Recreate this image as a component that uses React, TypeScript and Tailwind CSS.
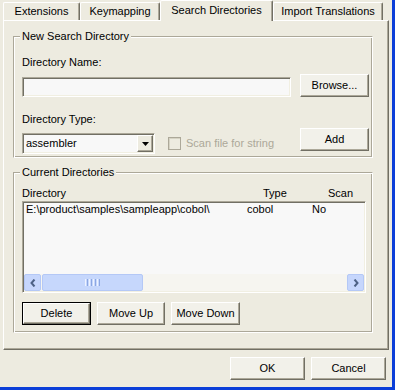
import React from "react";

const raised =
  "border border-t-white border-l-white border-r-[#716f64] border-b-[#716f64] shadow-[inset_-1px_-1px_0_#aca899]";
const sunken =
  "border border-t-[#aca899] border-l-[#aca899] border-r-white border-b-white shadow-[inset_1px_1px_0_#716f64,inset_-1px_-1px_0_#f1efe2]";
const etched =
  "border border-t-[#aca899] border-l-[#aca899] border-r-white border-b-white shadow-[inset_1px_1px_0_white,inset_-1px_-1px_0_#aca899]";

function Btn({ label, className, def }: { label: string; className: string; def?: boolean }) {
  if (def) {
    return (
      <div className={`h-[23px] border border-black ${className}`}>
        <div className={`h-full ${raised} bg-[#f2f1ea] flex items-center justify-center`}>{label}</div>
      </div>
    );
  }
  return (
    <div className={`h-[23px] ${raised} bg-[#f2f1ea] flex items-center justify-center ${className}`}>
      {label}
    </div>
  );
}

function Tab({ label, className, active }: { label: string; className: string; active?: boolean }) {
  return (
    <div
      className={`${
        active ? "h-[21px] -mb-px pb-[2px] bg-[#edebe0]" : "h-[18px]"
      } border-t border-l border-r border-t-white border-l-white border-r-[#716f64] shadow-[inset_-1px_0_0_#aca899] rounded-t-[2px] flex items-center justify-center ${className}`}
    >
      {label}
    </div>
  );
}

function Arrow({ dir }: { dir: "left" | "right" }) {
  return (
    <div className="w-[17px] h-full rounded-[2px] bg-[#c6d6fc] border border-[#b4c8f6] flex items-center justify-center">
      <svg width="6" height="8" viewBox="0 0 6 8">
        <path
          d={dir === "left" ? "M4.5 0.5 L1.5 4 L4.5 7.5" : "M1.5 0.5 L4.5 4 L1.5 7.5"}
          fill="none"
          stroke="#4d6185"
          strokeWidth="2"
        />
      </svg>
    </div>
  );
}

const App = () => {
  return (
    <div className="w-[395px] h-[390px] bg-[#edebe0] border-r-[3px] border-b-[3px] border-r-[#0b3ed8] border-b-[#0b3ed8] flex flex-col text-[11px] leading-[13px] text-black font-['Liberation_Sans',Arial,sans-serif]">
      {/* tabs */}
      <div className="h-[20px] pl-[3px] flex items-end relative z-10">
        <Tab label="Extensions" className="w-[77px]" />
        <Tab label="Keymapping" className="w-[80px]" />
        <Tab label="Search Directories" className="w-[113px]" active />
        <Tab label="Import Translations" className="w-[110px]" />
      </div>

      {/* tab panel */}
      <div className={`ml-[3px] w-[386px] h-[330px] ${raised} flex flex-col`}>
        <fieldset className={`ml-[9px] mt-[9px] w-[360px] h-[128px] ${etched} pl-[8px] pr-[3px] pb-0 pt-0`}>
          <legend className="-ml-[2px] px-[2px] bg-[#edebe0] leading-[13px]">New Search Directory</legend>
          <div className="mt-[13px]">Directory Name:</div>
          <div className="mt-[5px] h-[23px] flex items-start">
            <div className={`mt-[3px] w-[269px] h-[20px] ${sunken} bg-[#f8f8f8]`} />
            <Btn label="Browse..." className="ml-[9px] w-[69px]" />
          </div>
          <div className="mt-[16px]">Directory Type:</div>
          <div className="mt-[2px] flex items-start">
            <div className={`mt-[5px] w-[133px] h-[21px] ${sunken} bg-[#f8f8f8] flex items-center`}>
              <span className="pl-[3px] flex-1">assembler</span>
              <div className={`mr-px w-[16px] h-[17px] ${raised} bg-[#edebe0] flex items-center justify-center`}>
                <svg width="7" height="4" viewBox="0 0 7 4">
                  <polygon points="0,0 7,0 3.5,4" fill="black" />
                </svg>
              </div>
            </div>
            <div className="mt-[9px] ml-[13px] h-[13px] flex items-center">
              <div className="w-[13px] h-[13px] border border-[#aca899] shadow-[inset_1px_1px_0_#d6d3c4]" />
              <span className="ml-[5px] text-[#aca899]">Scan file for string</span>
            </div>
            <Btn label="Add" className="ml-auto w-[69px]" />
          </div>
        </fieldset>

        <fieldset className={`ml-[9px] mt-[8px] w-[360px] h-[167px] ${etched} pl-[8px] pr-[3px] pb-0 pt-0`}>
          <legend className="-ml-[2px] px-[2px] bg-[#edebe0] leading-[13px]">Current Directories</legend>
          <div className="mt-[8px] flex">
            <span className="w-[241px]">Directory</span>
            <span className="w-[65px]">Type</span>
            <span>Scan</span>
          </div>
          <div className={`mt-px w-[344px] h-[92px] ${sunken} bg-[#f8f8f8] flex flex-col`}>
            <div className="pt-px pl-[3px] flex">
              <span className="w-[221px]">{"E:\\product\\samples\\sampleapp\\cobol\\"}</span>
              <span className="w-[65px]">cobol</span>
              <span>No</span>
            </div>
            <div className="mt-auto mx-px mb-px h-[17px] bg-[#f6f5f0] flex">
              <Arrow dir="left" />
              <div className="ml-px w-[101px] h-full rounded-[2px] bg-[#c6d7fc] border border-[#b4c8f6] flex items-center justify-center gap-[1px]">
                <div className="w-px h-[7px] bg-[#eef3fe]" />
                <div className="w-px h-[7px] bg-[#8ca7e2]" />
                <div className="w-px h-[7px] bg-[#eef3fe]" />
                <div className="w-px h-[7px] bg-[#8ca7e2]" />
                <div className="w-px h-[7px] bg-[#eef3fe]" />
                <div className="w-px h-[7px] bg-[#8ca7e2]" />
                <div className="w-px h-[7px] bg-[#eef3fe]" />
                <div className="w-px h-[7px] bg-[#8ca7e2]" />
              </div>
              <div className="ml-auto h-full">
                <Arrow dir="right" />
              </div>
            </div>
          </div>
          <div className="mt-[9px] flex">
            <Btn label="Delete" className="w-[69px]" def />
            <Btn label="Move Up" className="ml-[6px] w-[68px]" />
            <Btn label="Move Down" className="ml-[6px] w-[69px]" />
          </div>
        </fieldset>
      </div>

      {/* dialog buttons */}
      <div className="mt-[7px] pr-[6px] flex justify-end">
        <Btn label="OK" className="w-[75px]" />
        <Btn label="Cancel" className="ml-[6px] w-[75px]" />
      </div>
    </div>
  );
};

export default App;
